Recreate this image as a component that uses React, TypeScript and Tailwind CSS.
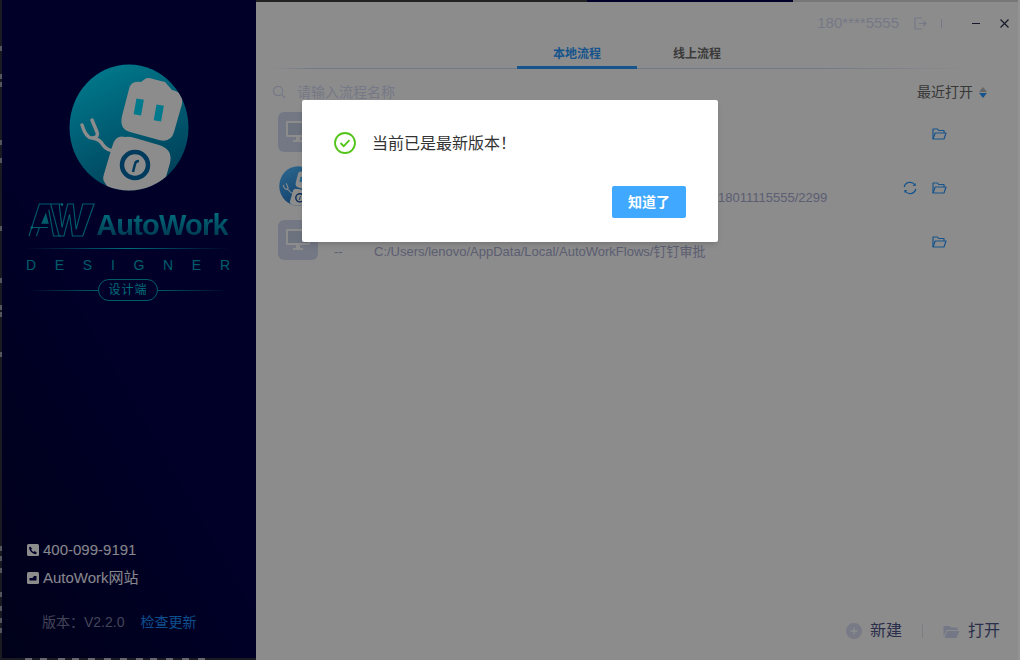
import React from "react";

const font = { fontFamily: '"Liberation Sans","Noto Sans CJK SC",sans-serif' };

function Robot({ id, from, to, dark, width = 120, height = 127 }: { id: string; from: string; to: string; dark: string; width?: number; height?: number }) {
  return (
    <svg width={width} height={height} viewBox="0 0 120 127">
      <defs>
        <linearGradient id={id} x1="0.25" y1="0" x2="0.7" y2="1">
          <stop offset="0" stopColor={from} />
          <stop offset="1" stopColor={to} />
        </linearGradient>
        <clipPath id={id + "c"}><ellipse cx="60" cy="63.500" rx="59.500" ry="63" /></clipPath>
      </defs>
      <ellipse cx="60" cy="63.500" rx="59.500" ry="63" fill={`url(#${id})`} />
      <g clipPath={`url(#${id}c)`} fill="#fff">
        <path d="M72 18 L76 15 Q79 13 84 15 L96 18 L103 26 Q115 28 113 40 L105 68 Q102 79 90 76 L61 68 Q50 65 53 52 L60 25 Q62 16 72 18Z" />
        <path d="M56 73 Q60 72 66 74 L90 81 Q104 85 101 99 L93 127 L41 127 L36 119 Q33 116 35 110 L43 83 Q46 70 56 73Z" />
      </g>
      <rect x="66" y="35" width="7.500" height="16" transform="rotate(10 70 43)" fill={from} />
      <rect x="86" y="41" width="7.500" height="16" transform="rotate(10 90 49)" fill={from} />
      <circle cx="66" cy="101" r="13" fill="none" stroke={dark} strokeWidth="4.500" />
      <path d="M64 108 L66 100 Q66.500 97 70 97" fill="none" stroke={dark} strokeWidth="2.500" />
      <path d="M13 61 Q17 74 23 74 Q31 75 34 81 Q38 87 47 87 M24 74 Q30 73 28 68 L23 56" fill="none" stroke="#fff" strokeWidth="3.500" strokeLinecap="round" />
    </svg>
  );
}

function AwMark() {
  return (
    <svg className="mb-[3px]" width="68" height="36" viewBox="0 0 72 36" fill="none" stroke="#00a8c4" strokeWidth="1.200">
      <path d="M1 35 L12 1 H36" />
      <path d="M4 26 H21 M9 35 L12 26 M22 7 L27 35 H35" />
      <path d="M24 1 L33 35 H38 L44 12 L47 35 H58 L70 1 H58 L51 28 L48 1 H42 L36 26 L33 1" />
      <path d="M19 10 L14 22 H22 Z" fill="#00a8c4" stroke="none" />
      <circle cx="36" cy="1.500" r="1.300" fill="#00c4dc" stroke="none" />
      <circle cx="4" cy="26" r="1.300" fill="#00c4dc" stroke="none" />
    </svg>
  );
}

function Monitor() {
  return (
    <div className="w-10 h-10 rounded-md bg-[#d3dbf0] flex items-center justify-center shrink-0">
      <svg width="24" height="24" viewBox="0 0 24 24">
        <rect x="0" y="1" width="24" height="16" rx="1" fill="#fff" />
        <rect x="2" y="3" width="20" height="12" fill="#c5cfe6" />
        <path d="M10 17h4v3h3v2H7v-2h3z" fill="#fff" />
      </svg>
    </div>
  );
}

function Folder() {
  return (
    <svg className="mt-[4px]" width="15" height="12" viewBox="0 0 15 12" fill="none" stroke="#2b9aff" strokeWidth="1.200" strokeLinejoin="round">
      <path d="M1 11V1h4.500l1.200 1.500h5.300V5" />
      <path d="M1 11h11l2-6H3.200z" />
    </svg>
  );
}

function Row({ icon, title, path, shift, sync }: { icon: React.ReactNode; title: string; path: string; shift?: boolean; sync?: boolean }) {
  return (
    <div className="h-[54px] flex items-center pl-[22px] pr-[73px]">
      {icon}
      <div className="ml-4 flex-1 min-w-0 flex items-end h-10">
        <span className="w-10 text-[13px] leading-4 text-[#a8acd0]">{title}</span>
        <span className={shift ? "ml-[344px] text-[13px] leading-4 text-[#a8acd0] whitespace-nowrap" : "text-[13px] leading-4 text-[#a8acd0] whitespace-nowrap"}>{path}</span>
      </div>
      {sync && (
        <svg className="mr-[15px] mt-[4px]" width="14" height="14" viewBox="0 0 14 14" fill="none" stroke="#2b9aff" strokeWidth="1.300">
          <path d="M1.200 6A6 6 0 0 1 12 4M12.800 8A6 6 0 0 1 2 10" />
          <path d="M12.600 2v3h-3z" fill="#2b9aff" stroke="none" />
          <path d="M1.400 12V9h3z" fill="#2b9aff" stroke="none" />
        </svg>
      )}
      <Folder />
    </div>
  );
}

const marks = [46, 74, 82, 140, 158, 226, 278, 305, 312, 352, 546, 556, 568, 592, 606, 618, 628];
const bottomMarks = [25, 40, 58, 72, 88, 104, 120, 136, 150, 166, 182, 198];

export default function App() {
  return (
    <div className="relative w-[1020px] h-[660px] overflow-hidden flex bg-white" style={font}>
      <aside className="w-[256px] shrink-0 bg-[linear-gradient(60deg,#00022e_0%,#00004c_50%)] flex flex-col items-center pt-[64px] pb-[28px]">
        <div className="ml-px">
          <Robot id="a" from="#00dcff" to="#00709e" dark="#006aa8" />
        </div>
        <div className="mt-[12px] flex items-end h-[38px]">
          <AwMark />
          <span className="text-[29px] leading-[32px] tracking-[-0.800px] font-bold bg-gradient-to-b from-[#00d8f0] to-[#005a86] bg-clip-text text-transparent">AutoWork</span>
        </div>
        <div className="mt-[7px] h-px w-[206px] bg-gradient-to-r from-transparent via-[#00c4dc] to-transparent" />
        <div className="mt-[8px] w-[204px] flex justify-between text-[14px] leading-4 text-[#00a8c0]">
          {"DESIGNER".split("").map((c, i) => <span key={i}>{c}</span>)}
        </div>
        <div className="mt-[6px] flex items-center w-[202px]">
          <div className="flex-1 h-px bg-gradient-to-r from-transparent to-[#00a8c0]" />
          <div className="w-[60px] h-[22px] rounded-full border border-[#00a8c0] text-[12px] tracking-[1px] text-[#00c4dc] flex items-center justify-center">设计端</div>
          <div className="flex-1 h-px bg-gradient-to-l from-transparent to-[#00a8c0]" />
        </div>
        <div className="mt-auto w-full pl-[27px]">
          <div className="flex items-center h-[28px] text-[15px] text-[#f4f4ff]">
            <svg width="12" height="12" viewBox="0 0 12 12" className="mr-1">
              <rect width="12" height="12" rx="1.500" fill="#fff" />
              <path d="M3 2.500 L5 4.500 L4.200 5.800 Q5.500 7.500 6.600 8 L7.800 7 L10 9 Q9 10.500 7.500 10 Q3 8.500 2 4 Q2 3 3 2.500Z" fill="#00004c" />
            </svg>
            400-099-9191
          </div>
          <div className="flex items-center h-[28px] text-[15px] text-[#f4f4ff]">
            <svg width="12" height="12" viewBox="0 0 12 12" className="mr-1">
              <rect width="12" height="12" rx="1.500" fill="#fff" />
              <path d="M2.500 6H5.500L7 4H9.500V8.500H2.500z" fill="#00004c" />
            </svg>
            AutoWork网站
          </div>
          <div className="mt-[20px] pl-[15px] h-[20px] flex items-center text-[14px]">
            <span className="text-[#7c7ca0]">版本：V2.2.0</span>
            <span className="ml-4 text-[14px] text-[#1c8fff]">检查更新</span>
          </div>
        </div>
      </aside>
      <main className="flex-1 min-w-0 flex flex-col">
        <header className="h-[44px] flex items-center justify-end pr-[11px] pt-[3px]">
          <span className="text-[15px] text-[#d6dbf5]">180****5555</span>
          <svg className="ml-[15px]" width="13" height="13" viewBox="0 0 13 13" fill="none" stroke="#d6dbf5" strokeWidth="1.200">
            <path d="M8 1H1v11h7M5 6.500h7.500M9.500 4l2.500 2.500L9.500 9" />
          </svg>
          <div className="ml-[14px] h-[9px] w-px bg-[#d6dbf5]" />
          <div className="ml-[30px] w-2 h-px bg-[#2a3050]" />
          <svg className="ml-[20px]" width="9" height="9" viewBox="0 0 9 9" stroke="#2a3050" strokeWidth="1.200">
            <path d="M0.500 0.500l8 8M8.500 0.500l-8 8" />
          </svg>
        </header>
        <nav className="mx-[18px] pr-[2px] h-[25px] flex justify-center bg-[linear-gradient(90deg,transparent,#d0dcf8_5%,#d0dcf8_75%,transparent_96%)] bg-bottom bg-no-repeat bg-[length:100%_1px]">
          <div className="w-[120px] h-[25px] border-b-[3px] border-[#2b9aff] text-[12px] font-bold text-[#2b9aff] text-center leading-[20px]">本地流程</div>
          <div className="w-[120px] text-[12px] font-bold text-[#6a6a6a] text-center leading-[20px]">线上流程</div>
        </nav>
        <div className="h-[26px] mt-[10px] flex items-center pl-[16px] pr-[33px]">
          <svg width="14" height="14" viewBox="0 0 14 14" fill="none" stroke="#d6dbf5" strokeWidth="1.200">
            <circle cx="6" cy="6" r="4.600" />
            <path d="M9.500 9.500L13 13" />
          </svg>
          <span className="ml-[11px] text-[14px] text-[#d6dbf5]">请输入流程名称</span>
          <span className="ml-auto text-[14px] text-[#666]">最近打开</span>
          <div className="ml-[6px] flex flex-col gap-[1px]">
            <div className="w-0 h-0 border-x-[4px] border-x-transparent border-b-[5px] border-b-[#bbb]" />
            <div className="w-0 h-0 border-x-[4px] border-x-transparent border-t-[5px] border-t-[#2b9aff]" />
          </div>
        </div>
        <div>
          <Row icon={<Monitor />} title="" path="" />
          <Row
            icon={<div className="w-10 h-10 shrink-0"><Robot id="b" from="#4db8ff" to="#1f6fc0" dark="#0f4f9a" width={40} height={40} /></div>}
            title=""
            path="18011115555/2299"
            shift
            sync
          />
          <Row icon={<Monitor />} title="--" path="C:/Users/lenovo/AppData/Local/AutoWorkFlows/钉钉审批" />
        </div>
        <footer className="mt-auto h-[58px] flex items-center justify-end pr-[20px] text-[16px] text-[#50568a]">
          <svg width="16" height="16" viewBox="0 0 16 16">
            <circle cx="8" cy="8" r="8" fill="#dbe0f5" />
            <path d="M8 4.500v7M4.500 8h7" stroke="#fff" strokeWidth="1.300" />
          </svg>
          <span className="ml-[8px]">新建</span>
          <div className="mx-[20px] h-[14px] w-px bg-[#e5e8f0]" />
          <svg width="17" height="13" viewBox="0 0 16 13">
            <path d="M0 12V1h6l1.500 1.500H14V5H3z" fill="#d4daf5" />
            <path d="M1 13h12l3-7H3.500z" fill="#d4daf5" />
          </svg>
          <span className="ml-[8px]">打开</span>
        </footer>
      </main>
      <div className="absolute inset-0 bg-black/45" />
      <div className="absolute left-0 top-0 bottom-0 w-[2px] bg-[#1a1a22] overflow-hidden">
        {marks.map((y) => (
          <div key={y} className="absolute left-0 w-[2px] h-[5px] bg-[#55555c]" style={{ top: y }} />
        ))}
      </div>
      <div className="absolute left-0 bottom-0 w-[256px] h-[2px] bg-[#1a1a22] overflow-hidden">
        {bottomMarks.map((x) => (
          <div key={x} className="absolute top-0 w-[7px] h-[2px] bg-[#66666c]" style={{ left: x }} />
        ))}
      </div>
      <div className="absolute left-[256px] right-0 top-0 h-[2px] bg-[#222]">
        <div className="absolute left-[331px] w-[206px] h-[2px] bg-[#00002a]" />
        <div className="absolute left-[537px] right-0 h-[2px] bg-[#777]" />
      </div>
      <div className="absolute right-0 top-0 bottom-0 w-[2px] bg-[#939393]" />
      <div className="absolute left-[302px] top-[100px] w-[416px] h-[142px] bg-white rounded-[2px] shadow-md pt-[32px] px-[32px]">
        <div className="flex items-center h-[22px]">
          <svg width="22" height="22" viewBox="0 0 22 22" fill="none" stroke="#52c41a">
            <circle cx="11" cy="11" r="10" strokeWidth="1.800" />
            <path d="M6.500 11l3.200 3.200 5.800-6" strokeWidth="1.800" />
          </svg>
          <span className="ml-[16px] text-[16px] leading-[24px] mt-[1px] text-[#333]">当前已是最新版本！</span>
        </div>
        <div className="flex justify-end mt-[32px]">
          <div className="w-[74px] h-[32px] rounded-[2px] bg-[#40a9ff] text-white text-[14px] font-bold flex items-center justify-center">知道了</div>
        </div>
      </div>
    </div>
  );
}
